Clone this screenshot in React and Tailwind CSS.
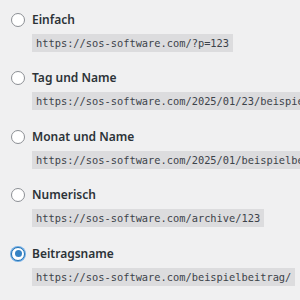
import React from 'react';

const options = [
    { label: 'Einfach', url: 'https://sos-software.com/?p=123' },
    { label: 'Tag und Name', url: 'https://sos-software.com/2025/01/23/beispielbeitrag/' },
    { label: 'Monat und Name', url: 'https://sos-software.com/2025/01/beispielbeitrag/' },
    { label: 'Numerisch', url: 'https://sos-software.com/archive/123' },
    { label: 'Beitragsname', url: 'https://sos-software.com/beispielbeitrag/', checked: true },
];

const Radio = ({ checked }) => (
    <span
        className={`flex items-center justify-center w-[14px] h-[14px] rounded-full bg-white shrink-0 border ${
            checked ? 'border-[#2271b1] shadow-[0_0_0_1px_#72aee6]' : 'border-[#8c8f94]'
        }`}
    >
        {checked && <span className="w-[7px] h-[7px] rounded-full bg-[#3582c4]" />}
    </span>
);

export default function App() {
    return (
        <div className="w-[300px] h-[300px] overflow-hidden bg-[#f0f0f1] pl-[11px] pt-[9.5px]">
            <div className="flex flex-col">
                {options.map((opt) => (
                    <div key={opt.label} className="flex flex-col mb-[16.6px]">
                        <div className="flex items-center h-[20px] gap-[7px]">
                            <Radio checked={opt.checked} />
                            <span className="font-['Noto_Sans',sans-serif] text-[12px] font-semibold text-[#2c3338] whitespace-nowrap">
                                {opt.label}
                            </span>
                        </div>
                        <div className="flex mt-[4px] pl-[21px]">
                            <code className="font-['DejaVu_Sans_Mono',monospace] text-[10.35px] leading-[18px] h-[18px] px-[4px] bg-[#dcdcde] text-[#3c434a] whitespace-nowrap">
                                {opt.url}
                            </code>
                        </div>
                    </div>
                ))}
            </div>
        </div>
    );
}
